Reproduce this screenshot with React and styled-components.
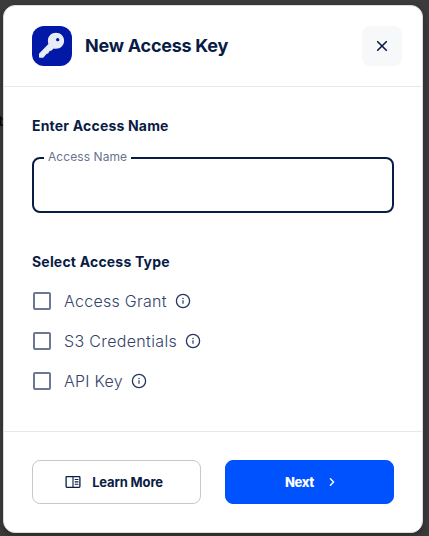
import React from "react";
import styled, { createGlobalStyle } from "styled-components";

const Global = createGlobalStyle`
  * { box-sizing: border-box; }
  body { margin: 0; background: #3b3b3b; font-family: Inter, sans-serif; color: #091c45; }
  button { font-family: inherit; color: inherit; cursor: pointer; padding: 0; }
`;

const Backdrop = styled.main`
  position: relative;
  width: 429px;
  height: 536px;
  padding: 5px 6px 3px 3px;
  background: #3b3b3b;
  overflow: hidden;
`;

const CoveredText = styled.span`
  position: absolute;
  left: -2px;
  top: 112px;
  font-size: 14px;
  line-height: 18px;
  font-weight: 700;
  color: #080808;
`;

const Dialog = styled.section`
  position: relative;
  display: flex;
  flex-direction: column;
  width: 420px;
  height: 528px;
  background: #fff;
  border: 1px solid #dcdcdc;
  border-radius: 12px;
  box-shadow: 0 3px 6px rgba(0, 0, 0, 0.3);
`;

const Header = styled.header`
  display: flex;
  align-items: center;
  height: 81px;
  padding: 0 20px 0 28px;
  border-bottom: 1px solid #e8e8e8;
`;

const KeyBadge = styled.div`
  width: 40px;
  height: 40px;
  svg { display: block; }
`;

const Title = styled.h1`
  flex: 1;
  margin: 0 0 0 13px;
  font-size: 18px;
  line-height: 24px;
  font-weight: 700;
  letter-spacing: -0.25px;
`;

const CloseButton = styled.button`
  display: grid;
  place-items: center;
  width: 40px;
  height: 40px;
  border: 0;
  border-radius: 8px;
  background: #f7f8fa;
`;

const Body = styled.div`
  flex: 1;
  padding: 29px 28px 0;
`;

const SectionTitle = styled.h2`
  margin: 0;
  font-size: 14px;
  line-height: 20px;
  font-weight: 700;
  letter-spacing: 0.19px;
`;

const Field = styled.fieldset`
  height: 63px;
  margin: 14px 0 39px;
  padding: 0 14px;
  border: 2px solid #091c45;
  border-radius: 8px;
  min-width: 0;
`;

const Legend = styled.legend`
  height: 16px;
  margin-left: -4px;
  padding: 0 4px;
  font-size: 12px;
  line-height: 14px;
  font-weight: 400;
  letter-spacing: 0.07px;
  color: #68748f;
`;

const TextInput = styled.input`
  display: block;
  width: 100%;
  height: 38px;
  padding: 0;
  border: 0;
  outline: 0;
  background: transparent;
  font: 400 16px Inter, sans-serif;
`;

const Options = styled.div`
  display: flex;
  flex-direction: column;
  margin-top: 9px;
`;

const Option = styled.label`
  display: flex;
  align-items: center;
  height: 40px;
  padding-left: 1px;
  font-size: 16px;
  line-height: 24px;
  font-weight: 300;
  color: #33436a;
  letter-spacing: ${(p) => p.$spacing};
`;

const Checkbox = styled.input`
  appearance: none;
  width: 18px;
  height: 18px;
  margin: 0 13px 0 0;
  border: 2px solid #6c7892;
  border-radius: 2px;
`;

const InfoSvg = styled.svg`
  margin-left: 8px;
`;

const Footer = styled.footer`
  display: grid;
  grid-template-columns: 1fr 1fr;
  column-gap: 24px;
  height: 101px;
  padding: 28px 28px 0;
  border-top: 1px solid #e8e8e8;
`;

const ActionButton = styled.button`
  display: flex;
  align-items: center;
  justify-content: center;
  gap: ${(p) => (p.$primary ? "10px" : "11px")};
  height: 44px;
  padding: ${(p) => (p.$primary ? "0 0 0 6px" : "0 5px 0 0")};
  border: 1px solid ${(p) => (p.$primary ? "#0052ff" : "#c8c8c8")};
  border-radius: 8px;
  background: ${(p) => (p.$primary ? "#0052ff" : "#fff")};
  color: ${(p) => (p.$primary ? "#fff" : "#091c45")};
  font-size: 13px;
  line-height: 20px;
  font-weight: ${(p) => (p.$primary ? 800 : 700)};
  letter-spacing: ${(p) => (p.$primary ? "-0.35px" : "-0.15px")};
`;

function KeyIcon() {
  return (
    <svg width="40" height="40" viewBox="0 0 40 40">
      <rect width="40" height="40" rx="12" fill="#0218a7" />
      <path
        fill="#e6edf7"
        fillRule="evenodd"
        d="M24 6.8c4.6 0 8.1 3.5 8.1 8s-3.5 8-8.1 8c-.8 0-1.6-.1-2.3-.3l-2.2 2-2.2.8-.9 1.9-1.9.7-2.8 3.3c-.3.4-.7.6-1.1.6H8c-.6 0-1-.4-1-1v-2.6c0-.4.1-.7.4-1l9-9.3c-.3-.9-.5-2-.5-3.1 0-4.5 3.5-8 8.1-8Zm1.7 5.2a1.65 1.65 0 1 0 0 3.3 1.65 1.65 0 0 0 0-3.3Z"
      />
    </svg>
  );
}

function InfoIcon() {
  return (
    <InfoSvg width="16" height="16" viewBox="0 0 16 16" fill="none">
      <circle cx="8" cy="8" r="6.6" stroke="#26375f" strokeWidth="1.3" />
      <circle cx="8" cy="5.4" r=".75" fill="#26375f" />
      <path d="M8 7.3v3.5" stroke="#26375f" strokeWidth="1.2" />
    </InfoSvg>
  );
}

function DocsIcon() {
  return (
    <svg width="16" height="16" viewBox="0 0 16 16" fill="none" stroke="#091c45">
      <rect x="1.1" y="2.6" width="13.8" height="10.8" rx=".8" strokeWidth="1.3" />
      <path d="M8 2.6v10.8M9.7 5.5h3.7M9.7 7.9h3.7M9.7 10.3h3.7" strokeWidth="1.1" />
    </svg>
  );
}

const options = [
  { label: "Access Grant", spacing: "0.27px" },
  { label: "S3 Credentials", spacing: "0.34px" },
  { label: "API Key", spacing: "0.25px" },
];

export default function App() {
  return (
    <>
      <Global />
      <Backdrop>
        <CoveredText>t</CoveredText>
        <Dialog>
          <Header>
            <KeyBadge><KeyIcon /></KeyBadge>
            <Title>New Access Key</Title>
            <CloseButton aria-label="Close">
              <svg width="16" height="16" viewBox="0 0 16 16" fill="none">
                <path d="m3.7 3.7 8.6 8.6M12.3 3.7l-8.6 8.6" stroke="#091c45" strokeWidth="1.6" strokeLinecap="round" />
              </svg>
            </CloseButton>
          </Header>
          <Body>
            <SectionTitle>Enter Access Name</SectionTitle>
            <Field>
              <Legend>Access Name</Legend>
              <TextInput aria-label="Access Name" />
            </Field>
            <SectionTitle>Select Access Type</SectionTitle>
            <Options>
              {options.map((o) => (
                <Option key={o.label} $spacing={o.spacing}>
                  <Checkbox type="checkbox" />
                  {o.label}
                  <InfoIcon />
                </Option>
              ))}
            </Options>
          </Body>
          <Footer>
            <ActionButton>
              <DocsIcon />
              Learn More
            </ActionButton>
            <ActionButton $primary>
              Next
              <svg width="16" height="16" viewBox="0 0 16 16" fill="none">
                <path d="m6.4 4.8 3.2 3.2-3.2 3.2" stroke="#fff" strokeWidth="1.4" strokeLinecap="round" strokeLinejoin="round" />
              </svg>
            </ActionButton>
          </Footer>
        </Dialog>
      </Backdrop>
    </>
  );
}
